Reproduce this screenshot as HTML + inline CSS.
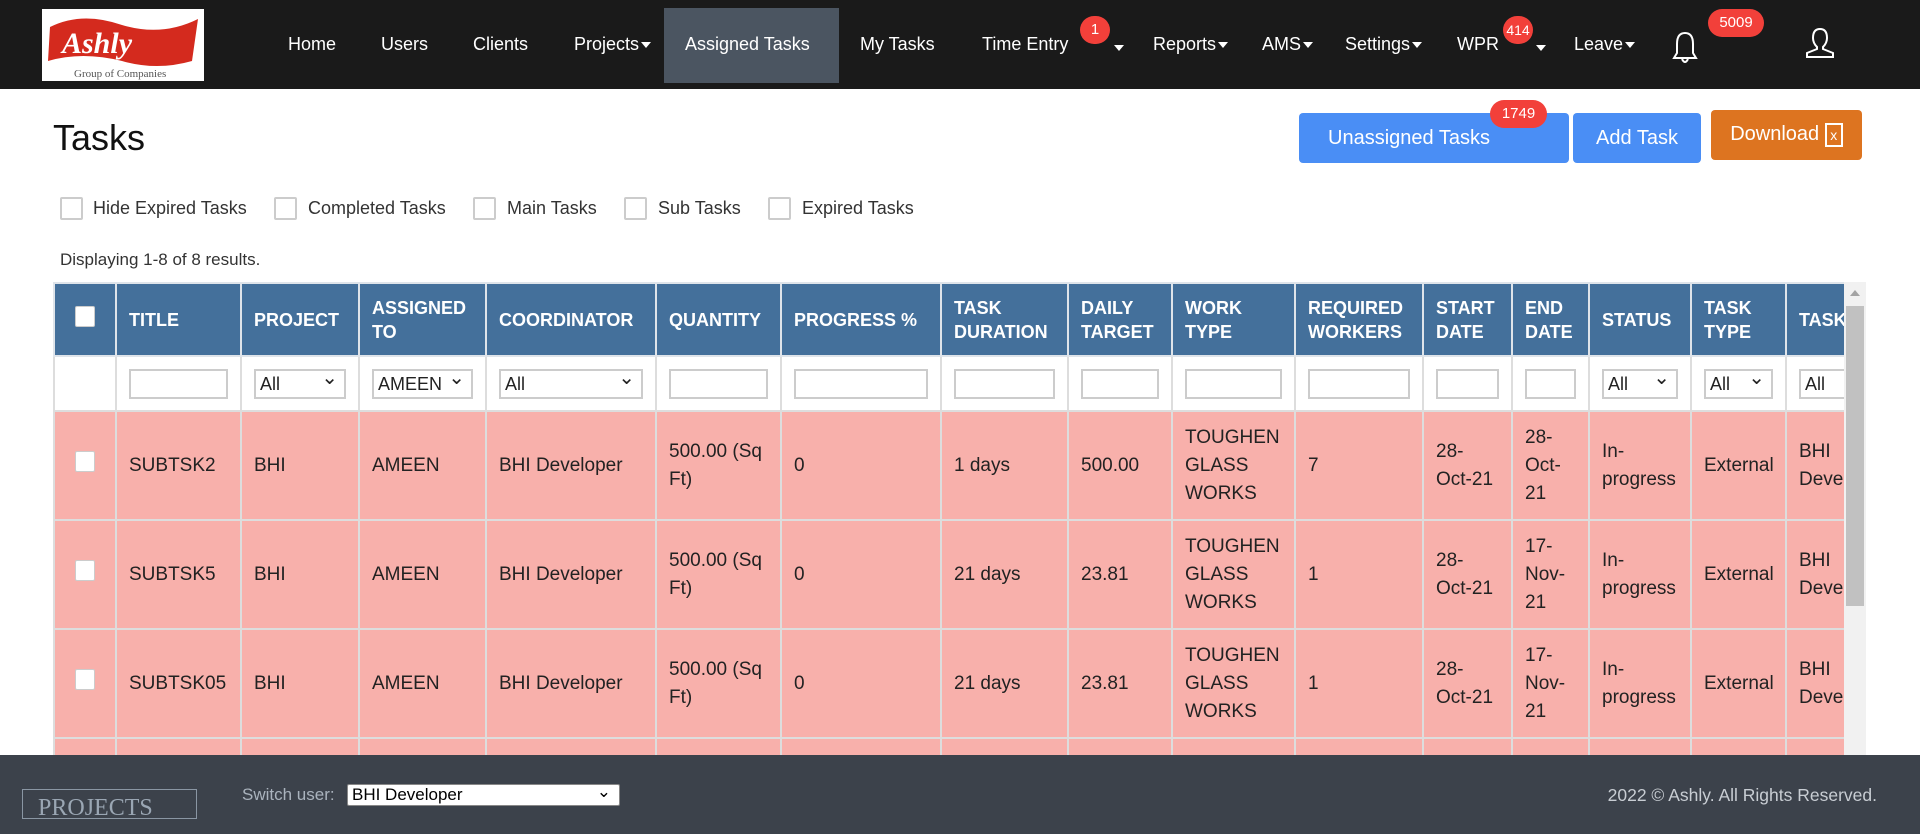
<!DOCTYPE html>
<html><head><meta charset="utf-8"><style>
*{box-sizing:border-box;margin:0;padding:0}
body{width:1920px;height:834px;overflow:hidden;font-family:"Liberation Sans",Arial,sans-serif;background:#fff;position:relative;color:#222}
.nav{position:absolute;left:0;top:0;width:1920px;height:89px;background:#1a1a1a}
.logo{position:absolute;left:42px;top:9px;width:162px;height:72px;background:#fff}
.ni{position:absolute;top:34px;color:#fff;font-size:18px;white-space:nowrap}
.car{display:inline-block;width:0;height:0;border-left:5px solid transparent;border-right:5px solid transparent;border-top:6px solid #fff;vertical-align:middle;margin-left:2px}
.act{position:absolute;left:664px;top:8px;width:175px;height:75px;background:#4b5561}
.bdg{position:absolute;background:#f2403a;color:#fff;font-size:15px;text-align:center;border-radius:14px;height:28px;line-height:28px}
h1{position:absolute;left:53px;top:117px;font-size:36px;font-weight:normal;color:#111}
.btn{position:absolute;color:#fff;font-size:20px;text-align:center;border-radius:4px}
.cb{position:absolute;top:197px;width:23px;height:23px;border:2px solid #ccc;border-radius:2px;background:#fff}
.cl{position:absolute;top:198px;font-size:18px;color:#333}
.tw{position:absolute;left:53px;top:282px;width:1791px;height:480px;overflow:hidden}
table{border-collapse:collapse;table-layout:fixed;width:1880px;font-size:19px}
td,th{border:2px solid #ddd;padding:0 12px;text-align:left;vertical-align:middle;line-height:28px}
th{background:#44709b;color:#fff;font-weight:bold;font-size:18px;height:73px;line-height:24px;border-color:#dfe4ea}
.fr td{background:#fff;height:55px}
.fr input,.fr .sel{width:100%;height:30px;border:2px solid #ccc;background:#fff;font-size:18px;padding-left:4px;line-height:26px;position:relative;overflow:hidden;white-space:nowrap}
.sel:after{content:"⌄";position:absolute;right:6px;top:-6px;font-size:20px}
.dr td{background:#f8b0ab;height:109px}
.ck{display:inline-block;width:20px;height:21px;background:#fff;border:1px solid #ccc;border-radius:2px}
.sb{position:absolute;left:1844px;top:282px;width:22px;height:473px;background:#f1f1f1}
.foot{position:absolute;left:0;top:755px;width:1920px;height:79px;background:#3c424b}
</style></head><body>
<div class="nav">
 <div class="logo">
  <svg width="162" height="72" viewBox="0 0 162 72"><path d="M8 18 Q40 2 80 16 Q120 28 156 10 L150 52 Q115 62 80 52 Q40 42 6 52 Z" fill="#d42a1e"/><text x="20" y="44" font-family="Liberation Serif,serif" font-style="italic" font-weight="bold" font-size="30" fill="#fff">Ashly</text><text x="32" y="68" font-family="Liberation Serif,serif" font-size="11" fill="#555">Group of Companies</text></svg>
 </div>
 <div class="act"></div>
 <div class="ni" style="left:288px">Home</div>
 <div class="ni" style="left:381px">Users</div>
 <div class="ni" style="left:473px">Clients</div>
 <div class="ni" style="left:574px">Projects<span class="car"></span></div>
 <div class="ni" style="left:685px">Assigned Tasks</div>
 <div class="ni" style="left:860px">My Tasks</div>
 <div class="ni" style="left:982px">Time Entry</div><span class="car" style="position:absolute;left:1112px;top:45px"></span>
 <div class="ni" style="left:1153px">Reports<span class="car"></span></div>
 <div class="ni" style="left:1262px">AMS<span class="car"></span></div>
 <div class="ni" style="left:1345px">Settings<span class="car"></span></div>
 <div class="ni" style="left:1457px">WPR</div><span class="car" style="position:absolute;left:1534px;top:45px"></span>
 <div class="ni" style="left:1574px">Leave<span class="car"></span></div>
 <div class="bdg" style="left:1080px;top:16px;width:30px">1</div>
 <div class="bdg" style="left:1503px;top:16px;width:30px;font-size:14px">414</div>
 <div class="bdg" style="left:1708px;top:9px;width:56px">5009</div>
 <svg style="position:absolute;left:1671px;top:30px" width="28" height="36" viewBox="0 0 28 36"><path d="M14 3 C7 3 6 9 6 14 L6 23 L3 28 L25 28 L22 23 L22 14 C22 9 21 3 14 3 Z M11 29 Q14 35 17 29" fill="none" stroke="#fff" stroke-width="2"/></svg>
 <svg style="position:absolute;left:1803px;top:26px" width="34" height="34" viewBox="0 0 34 34"><path d="M17 3 C11 3 10 8 10 12 C10 16 12 19 14 21 L14 23 L4 27 L4 31 L30 31 L30 27 L20 23 L20 21 C22 19 24 16 24 12 C24 8 23 3 17 3 Z" fill="none" stroke="#fff" stroke-width="2"/></svg>
</div>
<h1>Tasks</h1>
<div class="btn" style="left:1299px;top:113px;width:270px;height:50px;background:#4a8ef5;line-height:50px;padding-right:50px">Unassigned Tasks</div>
<div class="bdg" style="left:1490px;top:100px;width:57px;height:28px">1749</div>
<div class="btn" style="left:1573px;top:113px;width:128px;height:50px;background:#4a8ef5;line-height:50px">Add Task</div>
<div class="btn" style="left:1711px;top:110px;width:151px;height:50px;background:#dd7420;line-height:48px">Download <span style="display:inline-block;width:18px;height:24px;border:2px solid #fff;font-size:14px;line-height:20px;vertical-align:middle">x</span></div>
<div class="cb" style="left:60px"></div><div class="cl" style="left:93px">Hide Expired Tasks</div>
<div class="cb" style="left:274px"></div><div class="cl" style="left:308px">Completed Tasks</div>
<div class="cb" style="left:473px"></div><div class="cl" style="left:507px">Main Tasks</div>
<div class="cb" style="left:624px"></div><div class="cl" style="left:658px">Sub Tasks</div>
<div class="cb" style="left:768px"></div><div class="cl" style="left:802px">Expired Tasks</div>
<div style="position:absolute;left:60px;top:250px;font-size:17px;color:#333">Displaying 1-8 of 8 results.</div>
<div class="tw"><table>
<colgroup><col style="width:62px"><col style="width:125px"><col style="width:118px"><col style="width:127px"><col style="width:170px"><col style="width:125px"><col style="width:160px"><col style="width:127px"><col style="width:104px"><col style="width:123px"><col style="width:128px"><col style="width:89px"><col style="width:77px"><col style="width:102px"><col style="width:95px"><col style="width:148px"></colgroup>
<tr><th style="text-align:center"><span class="ck"></span></th><th>TITLE</th><th>PROJECT</th><th>ASSIGNED TO</th><th>COORDINATOR</th><th>QUANTITY</th><th>PROGRESS %</th><th>TASK DURATION</th><th>DAILY TARGET</th><th>WORK TYPE</th><th>REQUIRED WORKERS</th><th>START DATE</th><th>END DATE</th><th>STATUS</th><th>TASK TYPE</th><th>TASK OWNER</th></tr>
<tr class="fr"><td></td><td><input></td><td><div class="sel">All</div></td><td><div class="sel">AMEEN</div></td><td><div class="sel">All</div></td><td><input></td><td><input></td><td><input></td><td><input></td><td><input></td><td><input></td><td><input></td><td><input></td><td><div class="sel">All</div></td><td><div class="sel">All</div></td><td><div class="sel">All</div></td></tr>
<tr class="dr"><td style="text-align:center"><span class="ck"></span></td><td>SUBTSK2</td><td>BHI</td><td>AMEEN</td><td>BHI Developer</td><td>500.00 (Sq Ft)</td><td>0</td><td>1 days</td><td>500.00</td><td>TOUGHEN GLASS WORKS</td><td>7</td><td>28-Oct-21</td><td>28-Oct-21</td><td>In-progress</td><td>External</td><td>BHI Developer</td></tr>
<tr class="dr"><td style="text-align:center"><span class="ck"></span></td><td>SUBTSK5</td><td>BHI</td><td>AMEEN</td><td>BHI Developer</td><td>500.00 (Sq Ft)</td><td>0</td><td>21 days</td><td>23.81</td><td>TOUGHEN GLASS WORKS</td><td>1</td><td>28-Oct-21</td><td>17-Nov-21</td><td>In-progress</td><td>External</td><td>BHI Developer</td></tr>
<tr class="dr"><td style="text-align:center"><span class="ck"></span></td><td>SUBTSK05</td><td>BHI</td><td>AMEEN</td><td>BHI Developer</td><td>500.00 (Sq Ft)</td><td>0</td><td>21 days</td><td>23.81</td><td>TOUGHEN GLASS WORKS</td><td>1</td><td>28-Oct-21</td><td>17-Nov-21</td><td>In-progress</td><td>External</td><td>BHI Developer</td></tr>
<tr class="dr"><td style="text-align:center"><span class="ck"></span></td><td>SUBTSK06</td><td>BHI</td><td>AMEEN</td><td>BHI Developer</td><td>500.00 (Sq Ft)</td><td>0</td><td>21 days</td><td>23.81</td><td>TOUGHEN GLASS WORKS</td><td>1</td><td>28-Oct-21</td><td>17-Nov-21</td><td>In-progress</td><td>External</td><td>BHI Developer</td></tr>
</table></div>
<div class="sb"><div style="position:absolute;left:2px;top:24px;width:18px;height:300px;background:#c1c1c1"></div><div style="position:absolute;left:6px;top:8px;border-left:5px solid transparent;border-right:5px solid transparent;border-bottom:6px solid #a3a3a3"></div></div>
<div class="foot">
 <div style="position:absolute;left:22px;top:34px;width:175px;height:30px;border:1px solid #8a96a3;overflow:hidden;font-family:'Liberation Serif',serif;font-size:24px;color:#9aa6b3;padding-left:15px;line-height:36px">PROJECTS</div>
 <div style="position:absolute;left:242px;top:30px;color:#aab3bd;font-size:17px">Switch user:</div>
 <div style="position:absolute;left:347px;top:29px;width:273px;height:22px;background:#fff;border:1px solid #888;border-radius:2px;font-size:17px;line-height:20px;padding-left:4px;color:#000">BHI Developer<span style="position:absolute;right:8px;top:-3px">⌄</span></div>
 <div style="position:absolute;right:43px;top:30px;color:#c8cdd3;font-size:17.5px">2022 © Ashly. All Rights Reserved.</div>
</div>
</body></html>
